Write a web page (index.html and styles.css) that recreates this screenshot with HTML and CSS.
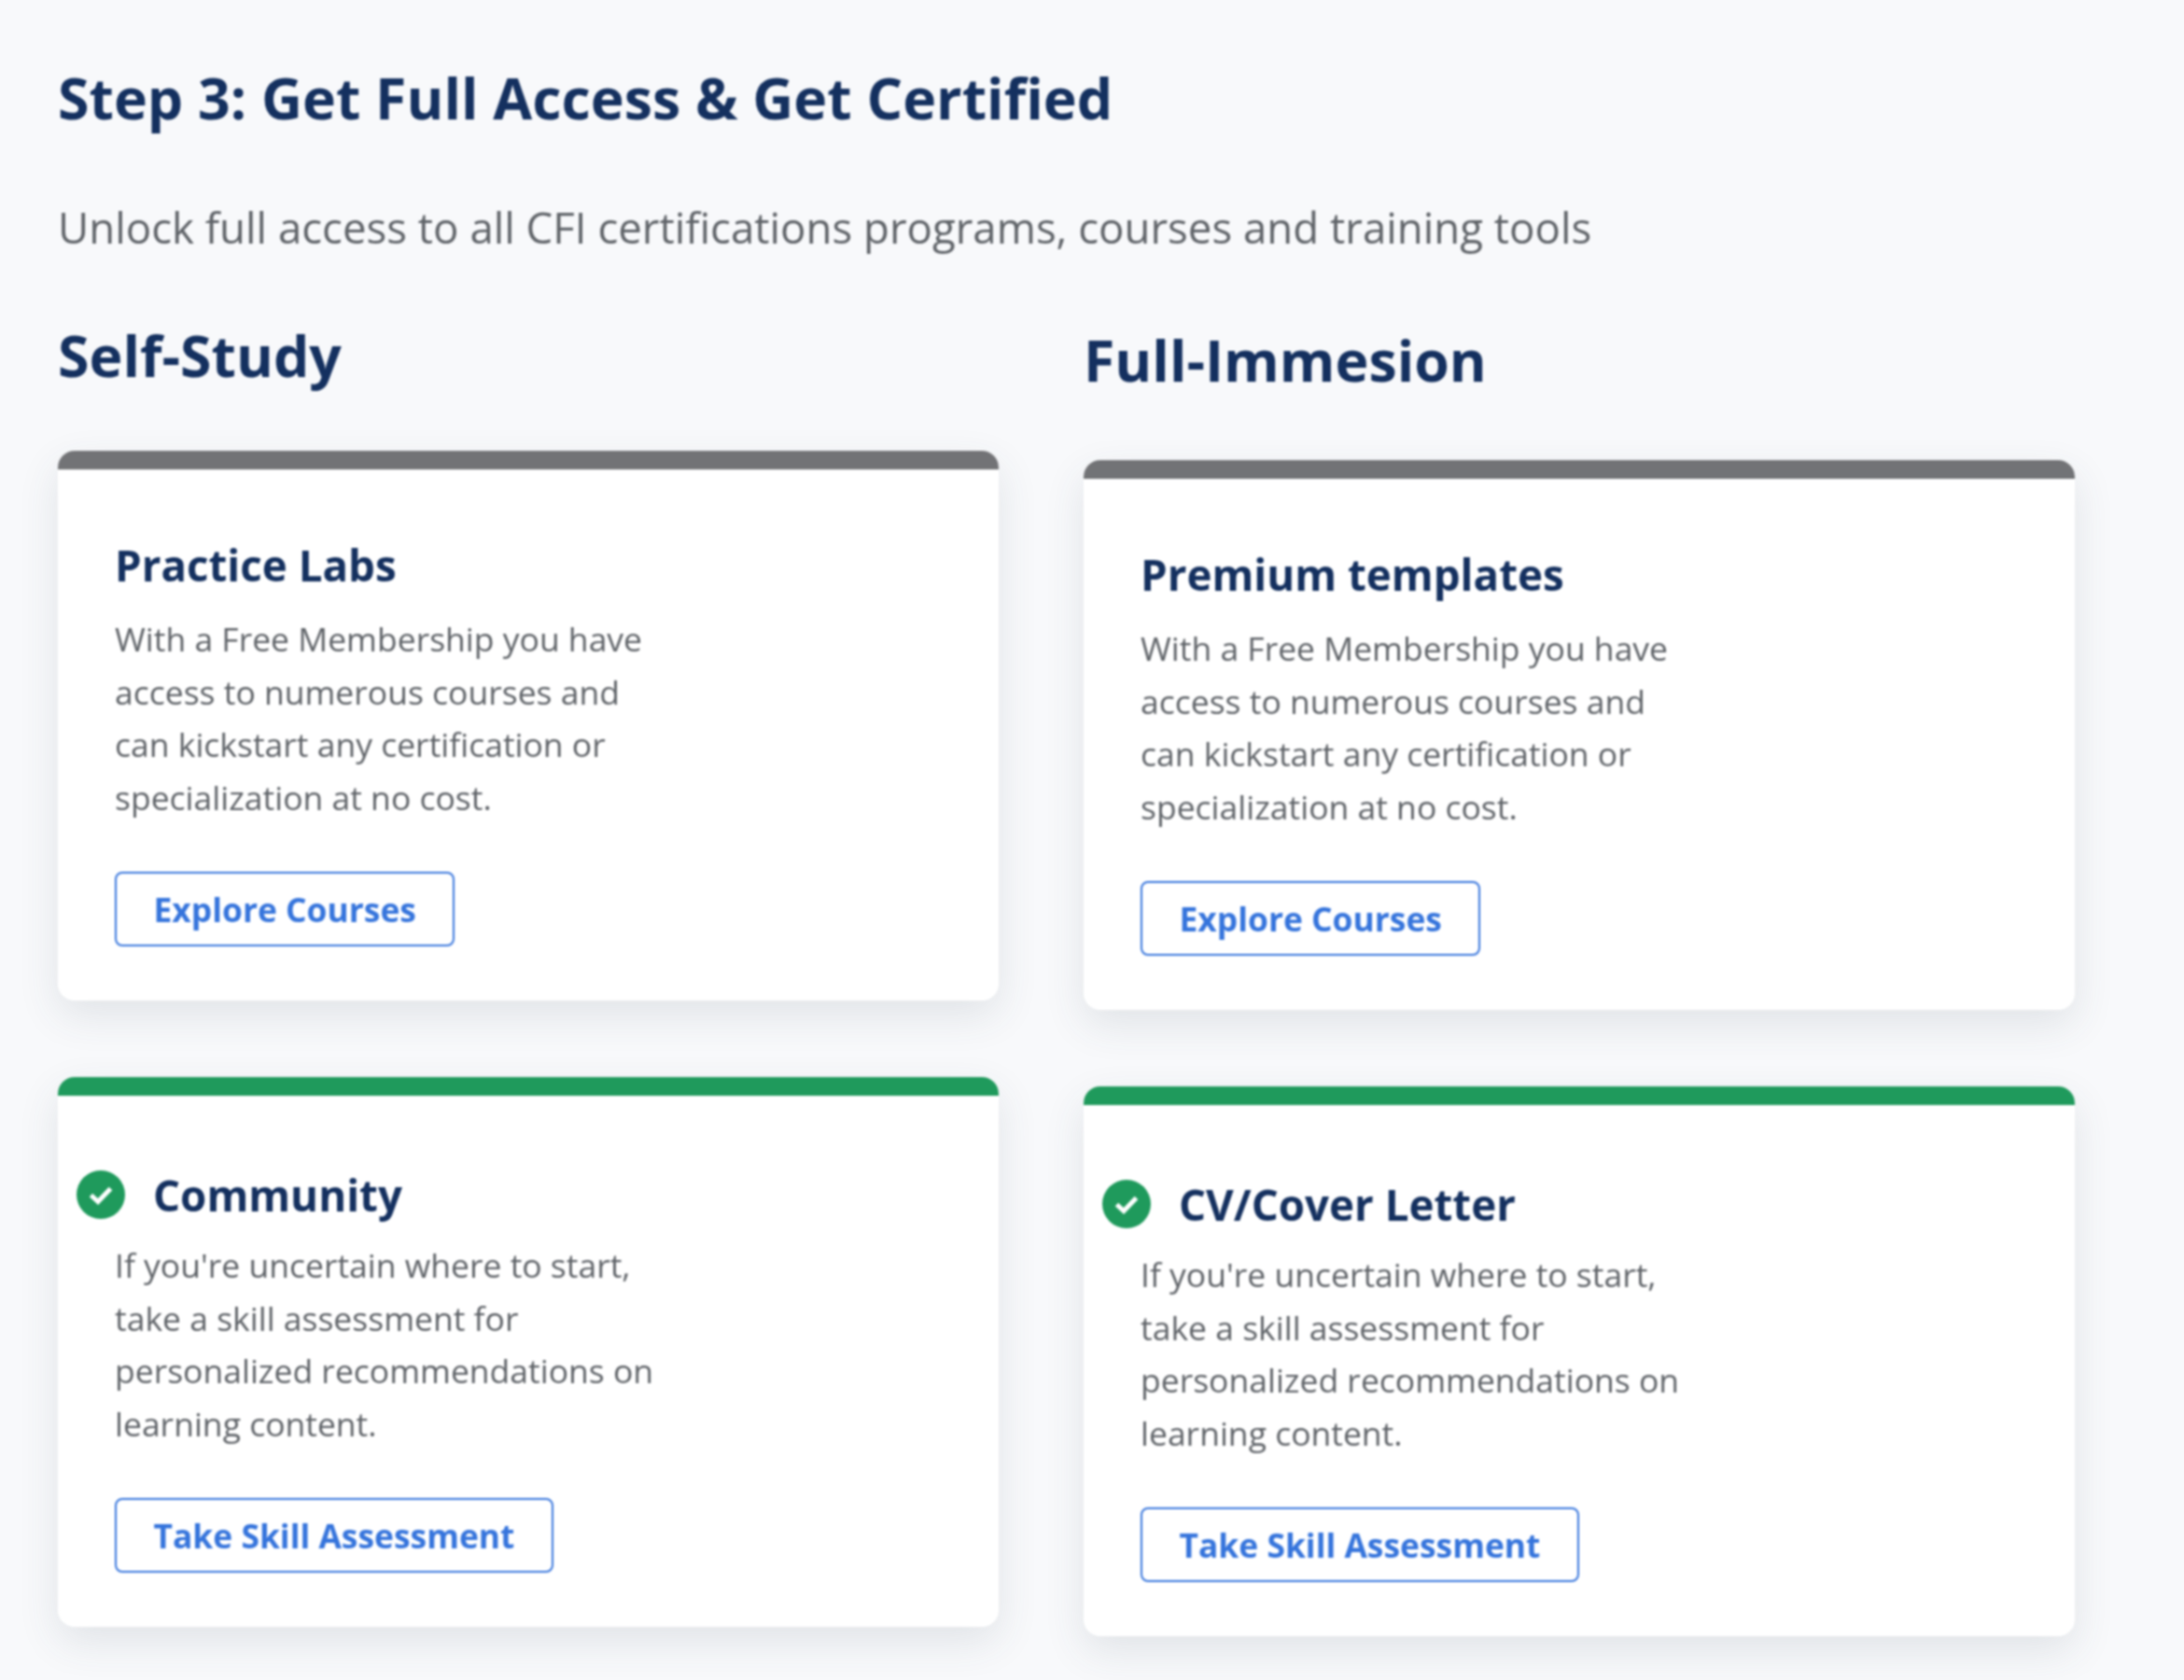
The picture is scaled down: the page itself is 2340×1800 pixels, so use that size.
FILE: index.html
```html
<!DOCTYPE html>
<html lang="en">
<head>
<meta charset="utf-8">
<title>Step 3</title>
<link rel="stylesheet" href="styles.css">
</head>
<body>
<main class="page">
  <h1 class="title">Step 3: Get Full Access &amp; Get Certified</h1>
  <p class="subtitle">Unlock full access to all CFI certifications programs, courses and training tools</p>
  <div class="columns">
    <section class="column column-left">
      <h2 class="column-title">Self-Study</h2>
      <article class="card card-grey">
        <h3 class="card-title">Practice Labs</h3>
        <p class="card-text">With a Free Membership you have<br>access to numerous courses and<br>can kickstart any certification or<br>specialization at no cost.</p>
        <a class="btn">Explore Courses</a>
      </article>
      <article class="card card-green">
        <div class="card-head">
          <svg class="check" viewBox="0 0 52 52"><circle cx="26" cy="26" r="26" fill="#1f9a5c"/><path d="M15.5 26.5l7.5 7 13.5-14" fill="none" stroke="#fff" stroke-width="5"/></svg>
          <h3 class="card-title">Community</h3>
        </div>
        <p class="card-text">If you're uncertain where to start,<br>take a skill assessment for<br>personalized recommendations on<br>learning content.</p>
        <a class="btn">Take Skill Assessment</a>
      </article>
    </section>
    <section class="column column-right">
      <h2 class="column-title">Full-Immesion</h2>
      <article class="card card-grey">
        <h3 class="card-title">Premium templates</h3>
        <p class="card-text">With a Free Membership you have<br>access to numerous courses and<br>can kickstart any certification or<br>specialization at no cost.</p>
        <a class="btn">Explore Courses</a>
      </article>
      <article class="card card-green">
        <div class="card-head">
          <svg class="check" viewBox="0 0 52 52"><circle cx="26" cy="26" r="26" fill="#1f9a5c"/><path d="M15.5 26.5l7.5 7 13.5-14" fill="none" stroke="#fff" stroke-width="5"/></svg>
          <h3 class="card-title">CV/Cover Letter</h3>
        </div>
        <p class="card-text">If you're uncertain where to start,<br>take a skill assessment for<br>personalized recommendations on<br>learning content.</p>
        <a class="btn">Take Skill Assessment</a>
      </article>
    </section>
  </div>
</main>
</body>
</html>
```

FILE: styles.css
```css
* { box-sizing: border-box; }
html, body { margin: 0; height: 100%; }
body {
  background: #f8f9fb;
  font-family: "Open Sans", "Noto Sans", sans-serif;
  overflow: hidden;
}
.page {
  width: 2340px;
  height: 1800px;
  padding: 61px 0 0 62px;
  filter: blur(0.9px);
}
.title {
  margin: 0;
  font-size: 60.8px;
  line-height: 88px;
  font-weight: 700;
  color: #14305f;
}
.subtitle {
  margin: 62px 0 0;
  font-size: 45.6px;
  line-height: 64px;
  font-weight: 400;
  color: #5f6368;
}
.columns {
  display: flex;
  gap: 91px;
  margin-top: 62px;
}
.column { display: flex; flex-direction: column; gap: 82px; }
.column-left { width: 1008px; }
.column-right { width: 1062px; }
.column-title {
  margin: 0 0 -36px;
  height: 100px;
  font-size: 60.8px;
  line-height: 88px;
  font-weight: 700;
  color: #14305f;
}
.column-right .column-title { margin-bottom: -26px; padding-top: 5px; }
.card {
  height: 589px;
  padding: 72px 61px 0;
  background: #fff;
  border-top: 20px solid #727376;
  border-radius: 18px;
  box-shadow: 0 16px 44px rgba(60, 70, 90, 0.12);
}
.card-green { border-top-color: #1f9a5c; }
.card-title {
  margin: 0;
  font-size: 45.7px;
  line-height: 60px;
  font-weight: 700;
  color: #14305f;
}
.card-head {
  display: flex;
  align-items: center;
  gap: 30px;
  margin-left: -41px;
  padding-top: 4px;
}
.card-text {
  margin: 21px 0 0;
  font-size: 35.5px;
  line-height: 56.5px;
  color: #5f6368;
}
.card-head + .card-text { margin-top: 17px; }
.check { width: 52px; height: 52px; flex: none; }
.btn {
  display: inline-flex;
  align-items: center;
  height: 80px;
  margin-top: 52px;
  padding: 0 39.5px;
  border: 2.5px solid #3574dc;
  border-radius: 8px;
  font-size: 35.4px;
  font-weight: 700;
  color: #3574dc;
}
```
